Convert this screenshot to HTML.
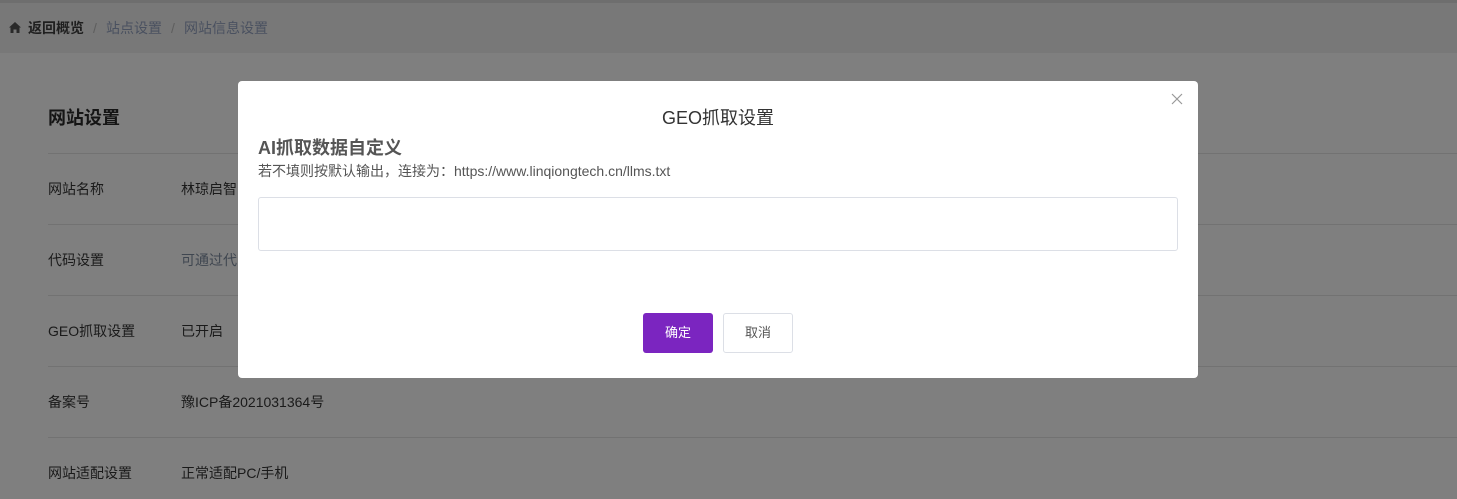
<html><head><style>
body{margin:0;width:1457px;height:499px;overflow:hidden;background:#7f7f7f;font-family:"Liberation Sans","Noto Sans CJK SC",sans-serif;position:relative}
.top{position:absolute;left:0;top:0;width:1457px;height:3px;background:#6e6e6e}
.hd{position:absolute;left:0;top:3px;width:1457px;height:50px;background:#787878;font-size:14px;line-height:16px}
.hd span{position:absolute;top:17px}
.t{position:absolute;left:48px;top:107px;font-size:18px;font-weight:bold;color:#151515;line-height:22px}
.ln{position:absolute;left:48px;right:0;height:1px;background:#727272}
.lb{position:absolute;left:48px;font-size:14px;color:#1a1a1a;line-height:16px}
.vl{position:absolute;left:181px;font-size:14px;color:#1a1a1a;line-height:16px}
.m{position:absolute;left:238px;top:81px;width:960px;height:297px;background:#fff;border-radius:4px}
</style></head><body>
<div class="top"></div>
<div class="hd">
<svg style="position:absolute;left:9px;top:19px" width="12" height="11" viewBox="0 0 12 11"><path d="M6 0L0 5.5H1.5V11H4.5V7.5H7.5V11H10.5V5.5H12Z" fill="#2a2a2a"/></svg>
<span style="left:28px;font-weight:bold;color:#1f1f1f">返回概览</span>
<span style="left:93px;color:#5e5e5e">/</span>
<span style="left:106px;color:#4a5160">站点设置</span>
<span style="left:171px;color:#5e5e5e">/</span>
<span style="left:184px;color:#4a5160">网站信息设置</span>
</div>
<div class="t">网站设置</div>
<div class="ln" style="top:153px"></div><div class="ln" style="top:224px"></div><div class="ln" style="top:295px"></div><div class="ln" style="top:366px"></div><div class="ln" style="top:437px"></div>
<div class="lb" style="top:181px">网站名称</div><div class="vl" style="top:181px">林琼启智</div>
<div class="lb" style="top:252px">代码设置</div><div class="vl" style="top:252px;color:#3f4650">可通过代</div>
<div class="lb" style="top:323px">GEO抓取设置</div><div class="vl" style="top:323px">已开启</div>
<div class="lb" style="top:394px">备案号</div><div class="vl" style="top:394px">豫ICP备2021031364号</div>
<div class="lb" style="top:465px">网站适配设置</div><div class="vl" style="top:465px">正常适配PC/手机</div>
<div class="m">
<div style="position:absolute;left:0;width:960px;top:27px;text-align:center;font-size:18px;line-height:20px;color:#333">GEO抓取设置</div>
<svg style="position:absolute;left:933px;top:12px" width="12" height="12" viewBox="0 0 12 12"><path d="M1 1L11 11M11 1L1 11" stroke="#999" stroke-width="1.2"/></svg>
<div style="position:absolute;left:20px;top:57px;font-size:18px;line-height:20px;font-weight:bold;color:#555">AI抓取数据自定义</div>
<div style="position:absolute;left:20px;top:82px;font-size:14px;line-height:16px;color:#555">若不填则按默认输出，连接为：https://www.linqiongtech.cn/llms.txt</div>
<div style="position:absolute;left:20px;top:116px;width:918px;height:52px;border:1px solid #dcdfe6;border-radius:3px"></div>
<div style="position:absolute;left:405px;top:232px;width:70px;height:40px;background:#7b25c0;border-radius:3px;color:#fff;font-size:13px;line-height:40px;text-align:center">确定</div>
<div style="position:absolute;left:485px;top:232px;width:68px;height:38px;border:1px solid #dcdfe6;border-radius:3px;color:#555;font-size:13px;line-height:38px;text-align:center">取消</div>
</div>
</body></html>
